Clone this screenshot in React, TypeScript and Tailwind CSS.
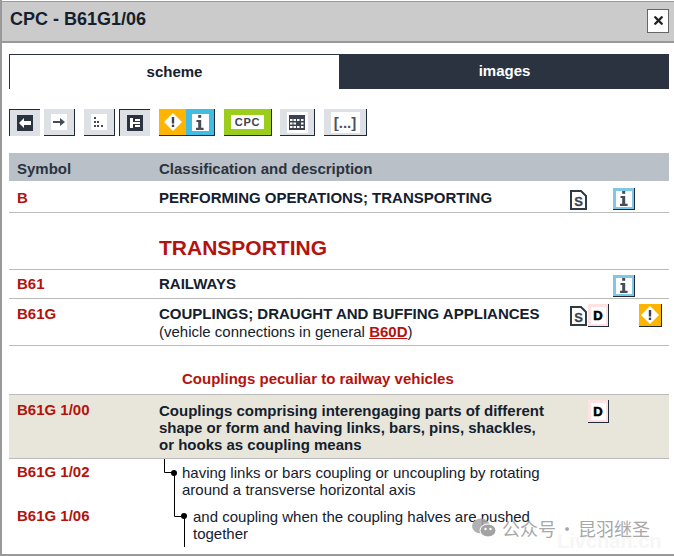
import type { ReactNode } from 'react'
import { X } from 'lucide-react'

function ToolBtn({ active, className, children }: { active?: boolean; className: string; children: ReactNode }) {
  return (
    <div
      className={
        active
          ? `h-[27px] flex items-center justify-center border-t border-l border-[#1f2a38] ${className}`
          : `h-[27px] flex items-center justify-center border-r border-b border-[#1f2a38] ${className}`
      }
    >
      {children}
    </div>
  )
}

function Tile({ className, children }: { className: string; children: ReactNode }) {
  return <div className={`flex items-center justify-center ${className}`}>{children}</div>
}

function WarnGlyph() {
  return (
    <svg width="20" height="20" viewBox="0 0 20 20">
      <path d="M10 1 L19 10 L10 19 L1 10 Z" fill="#fff" />
      <rect x="8.8" y="5" width="2.4" height="6.5" fill="#3b4350" />
      <rect x="8.8" y="12.6" width="2.4" height="2.4" fill="#3b4350" />
    </svg>
  )
}

function InfoGlyph() {
  return (
    <svg width="10" height="15" viewBox="0 0 10 15">
      <rect x="3.2" y="0" width="3" height="2.8" fill="#454d59" />
      <path d="M1.5 5 H6.2 V12.8 H8.6 V15 H1 V12.8 H3.2 V7 H1.5 Z" fill="#454d59" />
    </svg>
  )
}

function InfoIcon() {
  return (
    <div className="w-[22px] h-[22px] bg-[#7fc6e8] border-r border-b border-[#1f2a38] flex items-center justify-center">
      <div className="w-[16px] h-[16px] bg-white flex items-center justify-center">
        <InfoGlyph />
      </div>
    </div>
  )
}

function WarnIcon() {
  return (
    <div className="w-[23px] h-[23px] bg-[#ffb400] border-r border-b border-[#1f2a38] flex items-center justify-center">
      <WarnGlyph />
    </div>
  )
}

function SIcon() {
  return (
    <svg width="17" height="20" viewBox="0 0 17 20" className="mt-[2px]">
      <path d="M1 1 H11 L16 6 V19 H1 Z" fill="#fff" stroke="#2f3a44" strokeWidth="2" />
      <text x="8.5" y="16" textAnchor="middle" fontFamily="'Liberation Sans', sans-serif" fontSize="13" fontWeight="700" fill="#3b4350" stroke="#3b4350" strokeWidth="0.3">S</text>
    </svg>
  )
}

function DIcon() {
  return (
    <div className="w-[21px] h-[23px] bg-[#fde3e3] border-r border-b border-[#1f2a38] flex items-center justify-center">
      <div className="w-[15px] h-[17px] bg-white flex items-center justify-center text-[13px] font-bold leading-none text-black [-webkit-text-stroke:0.6px_black]">D</div>
    </div>
  )
}

type RowProps = {
  symbol?: string
  lift?: boolean
  className?: string
  icons?: ReactNode
  children: ReactNode
}

function Row({ symbol, lift, className = '', icons, children }: RowProps) {
  return (
    <div className={`grid grid-cols-[150px_411px_99px] ${className}`}>
      <div className={lift ? 'pl-2 -mt-px text-[15px] font-bold leading-[17px] text-[#b5120d]' : 'pl-2 text-[15px] font-bold leading-[17px] text-[#b5120d]'}>{symbol}</div>
      <div className="text-[15px] leading-[17px]">{children}</div>
      <div>{icons}</div>
    </div>
  )
}

function Icons({ s, d, i, w }: { s?: boolean; d?: boolean; i?: boolean; w?: boolean }) {
  return (
    <div className="grid grid-cols-[18px_25px_26px_23px] items-start">
      <div>{s && <SIcon />}</div>
      <div>{d && <DIcon />}</div>
      <div>{i && <InfoIcon />}</div>
      <div>{w && <WarnIcon />}</div>
    </div>
  )
}

export default function App() {
  return (
    <div className="relative w-[674px] h-[556px] overflow-hidden bg-white border-l-2 border-b-2 border-[#999] font-['Liberation_Sans',sans-serif] text-[#14202e] flex flex-col">
      <header className="h-[42px] mt-px shrink-0 bg-[#cbcbcb] border-t border-b-2 border-[#999] flex items-center justify-between pl-2 pr-[5px]">
        <h1 className="text-[18px] font-bold leading-none -mt-[5px] text-[#14202e]">CPC - B61G1/06</h1>
        <button className="w-[22px] h-[24px] -mt-[2px] bg-white border border-[#666] flex items-center justify-center" aria-label="Close">
          <X size={13} strokeWidth={4.5} className="text-[#222]" />
        </button>
      </header>

      <div className="ml-[7px] mt-[11px] w-[660px] flex shrink-0 h-[35px] text-[15px] font-bold">
        <div className="w-[331px] bg-white border-t border-l border-r border-[#2b3340] flex items-center justify-center">scheme</div>
        <div className="w-[329px] bg-[#2b3340] text-white flex items-center justify-center">images</div>
      </div>

      <div className="ml-[7px] mt-[20px] flex shrink-0">
        <ToolBtn active className="w-[31px] bg-[#dde1e6]">
          <Tile className="w-[16px] h-[16px] bg-[#2b3340]">
            <svg width="12" height="10" viewBox="0 0 12 10"><path d="M0 5 L5 0 V3 H12 V7 H5 V10 Z" fill="#fff" /></svg>
          </Tile>
        </ToolBtn>
        <ToolBtn className="w-[31px] ml-[4px] bg-[#dde1e6]">
          <Tile className="w-[16px] h-[16px] bg-white">
            <svg width="12" height="10" viewBox="0 0 12 10"><path d="M0 4 H7 V1 L12 5 L7 9 V6 H0 Z" fill="#444c58" /></svg>
          </Tile>
        </ToolBtn>
        <ToolBtn className="w-[31px] ml-[9px] bg-[#dde1e6]">
          <Tile className="w-[16px] h-[16px] bg-white">
            <svg width="12" height="12" viewBox="0 0 12 12" fill="#444c58">
              <rect x="1" y="1" width="2" height="2" />
              <rect x="1" y="5" width="2" height="2" />
              <rect x="4" y="5" width="2" height="2" />
              <rect x="1" y="9" width="2" height="2" />
              <rect x="4" y="9" width="2" height="2" />
              <rect x="8" y="9" width="2" height="2" />
            </svg>
          </Tile>
        </ToolBtn>
        <ToolBtn active className="w-[31px] ml-[4px] bg-[#dde1e6]">
          <Tile className="w-[16px] h-[16px] bg-[#2b3340]">
            <svg width="12" height="12" viewBox="0 0 12 12">
              <path d="M1 1 H4 V5 H11 V7 H4 V11 H1 Z" fill="#fff" />
              <rect x="6" y="2" width="5" height="2" fill="#fff" />
              <rect x="6" y="8" width="5" height="2" fill="#fff" />
            </svg>
          </Tile>
        </ToolBtn>
        <div className="ml-[9px] h-[27px] w-[56px] flex border-b border-r border-[#1f2a38]">
          <div className="w-[27px] bg-[#ffb400] flex items-center justify-center"><WarnGlyph /></div>
          <div className="flex-1 bg-[#42bce2] flex items-center justify-center">
            <Tile className="w-[17px] h-[17px] bg-white"><InfoGlyph /></Tile>
          </div>
        </div>
        <ToolBtn className="w-[48px] ml-[9px] bg-[#9bcd1c]">
          <Tile className="w-[33px] h-[14px] bg-white text-[11px] font-bold tracking-[0.8px] text-[#3b4350] leading-none">CPC</Tile>
        </ToolBtn>
        <ToolBtn className="w-[35px] ml-[8px] bg-[#dde1e6]">
          <Tile className="w-[21px] h-[21px] bg-white">
            <svg width="16" height="15" viewBox="0 0 16 15">
              <rect width="16" height="15" fill="#3b4350" />
              <g fill="#fff">
                <rect x="1" y="4" width="2.5" height="2" /><rect x="4.5" y="4" width="2.5" height="2" /><rect x="8" y="4" width="2.5" height="2" /><rect x="12" y="4" width="2.5" height="2" />
                <rect x="1" y="7.5" width="2.5" height="2" /><rect x="4.5" y="7.5" width="2.5" height="2" /><rect x="12" y="7.5" width="2.5" height="2" />
                <rect x="1" y="11" width="2.5" height="2" /><rect x="4.5" y="11" width="2.5" height="2" /><rect x="8" y="11" width="2.5" height="2" /><rect x="12" y="11" width="2.5" height="2" />
              </g>
            </svg>
          </Tile>
        </ToolBtn>
        <ToolBtn className="w-[43px] ml-[9px] bg-[#dde1e6]">
          <Tile className="w-[29px] h-[21px] bg-white text-[15px] font-bold text-[#4a5260] leading-none">[...]</Tile>
        </ToolBtn>
      </div>

      <div className="ml-[7px] mt-[17px] w-[660px] flex flex-col shrink-0">
        <div className="h-[28px] pt-[4px] bg-[#b9c0c7] grid grid-cols-[150px_1fr] items-center text-[15px] font-bold text-[#2b3340]">
          <div className="pl-2">Symbol</div>
          <div>Classification and description</div>
        </div>

        <Row symbol="B" className="h-[32px] pt-2 border-b border-[#bbb]" icons={<div className="-mt-[1px]"><Icons s i /></div>}>
          <span className="font-bold">PERFORMING OPERATIONS; TRANSPORTING</span>
        </Row>

        <div className="h-[57px] border-b border-[#bbb] pl-[150px] pt-[22px] text-[21px] font-bold leading-[26px] text-[#b5120d]">TRANSPORTING</div>

        <Row symbol="B61" className="h-[29px] pt-[5px] border-b border-[#bbb]" icons={<Icons i />}>
          <span className="font-bold">RAILWAYS</span>
        </Row>

        <Row symbol="B61G" className="h-[47px] pt-[6px] border-b border-[#bbb]" icons={<div className="-mt-[1px]"><Icons s d w /></div>}>
          <div className="font-bold leading-[18px]">COUPLINGS; DRAUGHT AND BUFFING APPLIANCES</div>
          <div>
            (vehicle connections in general{' '}
            <span className="font-bold text-[#b5120d] underline decoration-[#b5120d]">B60D</span>)
          </div>
        </Row>

        <div className="h-[48px] pl-[173px] pt-[24px] text-[15px] font-bold leading-[18px] text-[#b5120d]">Couplings peculiar to railway vehicles</div>

        <Row
          symbol="B61G 1/00"
          lift
          className="h-[65px] pt-[7px] bg-[#e8e6da] border-t border-b border-[#bbb]"
          icons={<div className="-mt-[2px]"><Icons d /></div>}
        >
          <div className="font-bold">
            Couplings comprising interengaging parts of different<br />
            shape or form and having links, bars, pins, shackles,<br />
            or hooks as coupling means
          </div>
        </Row>

        <Row symbol="B61G 1/02" lift className="h-[44px] pt-[5px]">
          <div className="pl-[23px]">having links or bars coupling or uncoupling by rotating<br />around a transverse horizontal axis</div>
        </Row>
        <Row symbol="B61G 1/06" lift className="h-[44px] pt-[5px]">
          <div className="pl-[34px]">and coupling when the coupling halves are pushed<br />together</div>
        </Row>
      </div>

      <svg className="absolute left-[-2px] top-0 pointer-events-none" width="674" height="556" viewBox="0 0 674 556">
        <path d="M164.5 459 V472.5 H174 M174.5 473 V516.5 H184 M184.5 516 V547" fill="none" stroke="#000" strokeWidth="1" />
        <circle cx="174" cy="473" r="3" fill="#000" />
        <circle cx="184" cy="516" r="3" fill="#000" />
      </svg>

      {/* watermark */}
      <div className="absolute left-[555px] top-[531px] text-[20px] font-bold leading-none text-[#f6f6f6] pointer-events-none whitespace-nowrap">Livchan.cn</div>
      <div className="absolute left-[470px] top-[518px] flex items-center gap-[6px] text-[#a8a8a8] pointer-events-none">
        <svg width="24" height="20" viewBox="0 0 24 20" fill="#a3a3a3">
          <ellipse cx="9" cy="8" rx="9" ry="7.5" opacity="0.85" />
          <ellipse cx="16" cy="12.5" rx="8" ry="6.5" stroke="#fff" strokeWidth="1" />
          <circle cx="13.5" cy="11" r="1.2" fill="#fff" />
          <circle cx="18.5" cy="11" r="1.2" fill="#fff" />
        </svg>
        <span className="text-[18px] font-['Noto_Sans_CJK_SC',sans-serif] leading-none whitespace-nowrap [word-spacing:-2px]">公众号 · 昆羽继圣</span>
      </div>
    </div>
  )
}
